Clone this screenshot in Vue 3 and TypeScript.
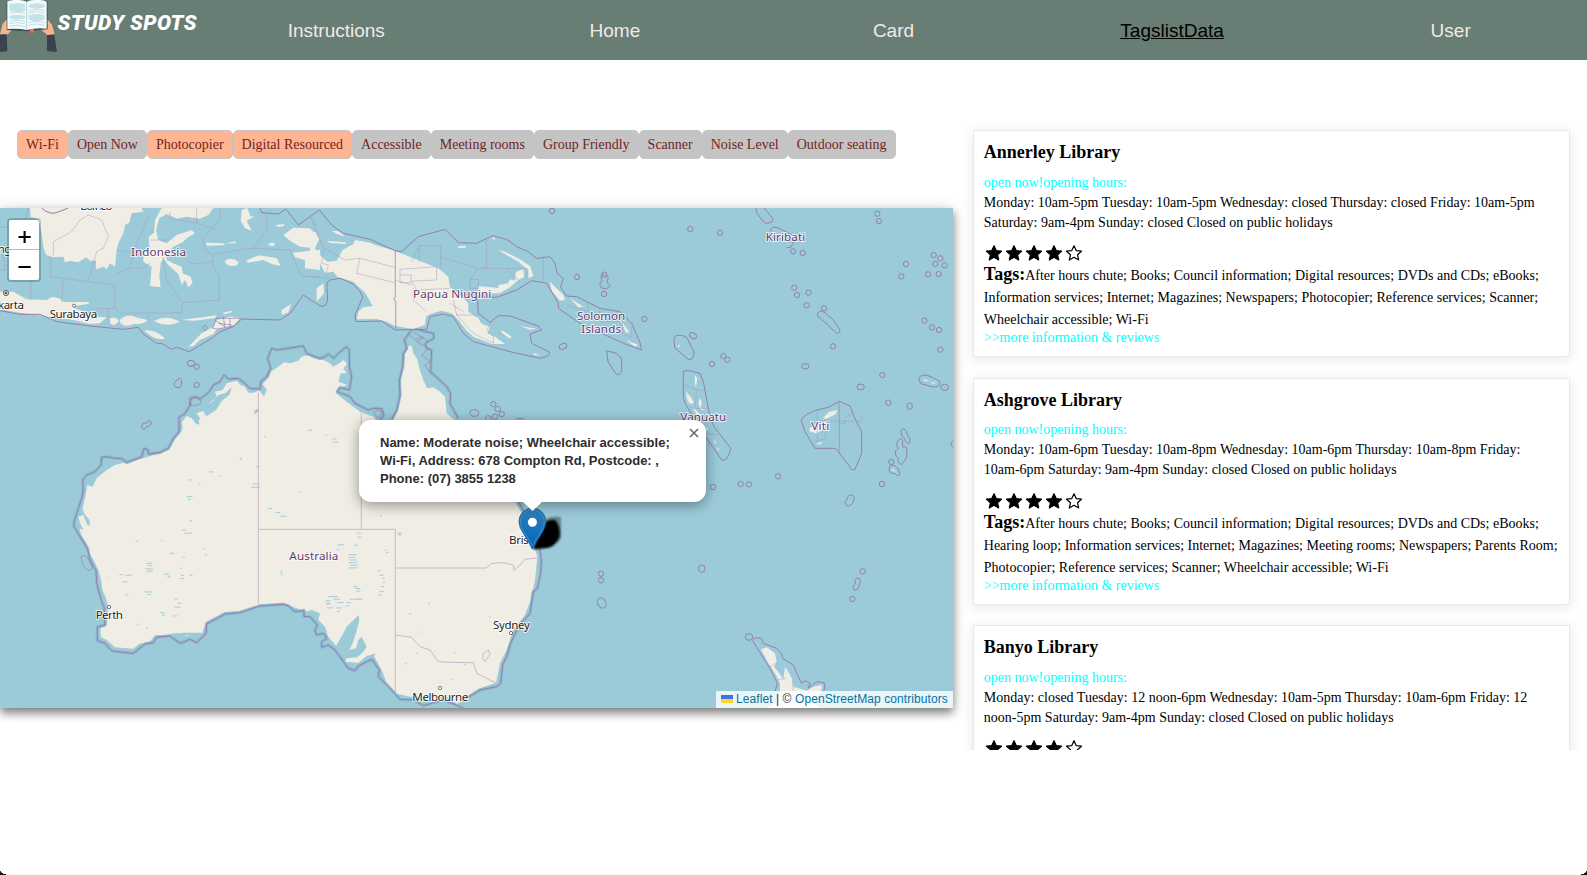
<script setup lang="ts">
interface NavItem { label: string; active?: boolean }
interface Tag { label: string; on?: boolean }
interface Library { name: string; hours: string; tags: string }
interface MapLabel { text: string; x: number; y: number; w: number; kind: 'country' | 'city' }

const nav: NavItem[] = [
  { label: 'Instructions' },
  { label: 'Home' },
  { label: 'Card' },
  { label: 'TagslistData', active: true },
  { label: 'User' },
]

const tags: Tag[] = [
  { label: 'Wi-Fi', on: true },
  { label: 'Open Now' },
  { label: 'Photocopier', on: true },
  { label: 'Digital Resourced', on: true },
  { label: 'Accessible' },
  { label: 'Meeting rooms' },
  { label: 'Group Friendly' },
  { label: 'Scanner' },
  { label: 'Noise Level' },
  { label: 'Outdoor seating' },
]

const libraries: Library[] = [
  {
    name: 'Annerley Library',
    hours: 'Monday: 10am-5pm Tuesday: 10am-5pm Wednesday: closed Thursday: closed Friday: 10am-5pm Saturday: 9am-4pm Sunday: closed Closed on public holidays',
    tags: 'After hours chute; Books; Council information; Digital resources; DVDs and CDs; eBooks; Information services; Internet; Magazines; Newspapers; Photocopier; Reference services; Scanner; Wheelchair accessible; Wi-Fi',
  },
  {
    name: 'Ashgrove Library',
    hours: 'Monday: 10am-6pm Tuesday: 10am-8pm Wednesday: 10am-6pm Thursday: 10am-8pm Friday: 10am-6pm Saturday: 9am-4pm Sunday: closed Closed on public holidays',
    tags: 'After hours chute; Books; Council information; Digital resources; DVDs and CDs; eBooks; Hearing loop; Information services; Internet; Magazines; Meeting rooms; Newspapers; Parents Room; Photocopier; Reference services; Scanner; Wheelchair accessible; Wi-Fi',
  },
  {
    name: 'Banyo Library',
    hours: 'Monday: closed Tuesday: 12 noon-6pm Wednesday: 10am-5pm Thursday: 10am-6pm Friday: 12 noon-5pm Saturday: 9am-4pm Sunday: closed Closed on public holidays',
    tags: '',
  },
]

// Map geometry uses three units per screen pixel.
const labels: MapLabel[] = [
  { text: 'Borneo', x: 241, y: 30, w: 96, kind: 'city' },
  { text: 'Indonesia', x: 393, y: 168, w: 165, kind: 'country' },
  { text: 'Papua Niugini', x: 1239, y: 295, w: 235, kind: 'country' },
  { text: 'Solomon', x: 1731, y: 360, w: 145, kind: 'country' },
  { text: 'Islands', x: 1744, y: 400, w: 119, kind: 'country' },
  { text: 'Kiribati', x: 2297, y: 124, w: 119, kind: 'country' },
  { text: 'Vanuatu', x: 2041, y: 663, w: 138, kind: 'country' },
  { text: 'Viti', x: 2434, y: 690, w: 54, kind: 'country' },
  { text: 'Australia', x: 868, y: 1081, w: 147, kind: 'country' },
  { text: 'karta', x: -6, y: 328, w: 78, kind: 'city' },
  { text: 'ng', x: -7, y: 160, w: 41, kind: 'city' },
  { text: 'Surabaya', x: 149, y: 355, w: 143, kind: 'city' },
  { text: 'Perth', x: 287, y: 1257, w: 82, kind: 'city' },
  { text: 'Brisbane', x: 1527, y: 1033, w: 138, kind: 'city' },
  { text: 'Sydney', x: 1479, y: 1288, w: 111, kind: 'city' },
  { text: 'Melbourne', x: 1237, y: 1503, w: 168, kind: 'city' },
]

// Maritime boundary around Australia, drawn twice: a soft shallow band and the boundary line.
const australiaBoundary =
  'M350 1355 335 1352 315 1330 292 1322 292 1280 315 1275 312 1220 305 1205 290 1150 288 1112 270 1080 262 1045 240 1010 222 980 222 965 235 925 245 895 250 870 248 840 260 825 285 815 303 795 305 772 320 770 345 775 365 775 380 787 425 770 432 745 445 750 445 762 480 757 505 745 520 715 537 695 537 652 555 640 572 612 570 595 590 590 600 598 628 575 640 555 660 545 672 525 685 537 715 535 735 550 750 565 780 567 782 545 800 530 812 505 803 475 815 445 830 450 910 438 920 460 960 475 975 470 985 462 1002 475 1015 460 1040 440 1048 450 1048 500 1055 530 1048 570 1020 563 1012 575 1050 590 1065 610 1105 630 1120 625 1145 625 1152 645 1140 660' +
  'M1175 658 1190 630 1200 585 1198 540 1208 500 1210 460 1220 445 1213 420 1230 395 1240 385 1300 400 1302 415 1275 430 1280 445 1295 450 1292 515 1340 560 1352 580 1350 610 1375 655' +
  'M1555 905 1580 950 1620 1050 1624 1080 1622 1120 1612 1165 1600 1175 1590 1240 1555 1280 1532 1330 1520 1370 1508 1395 1502 1450 1490 1460 1440 1470 1400 1495' +
  'M1390 1524 1360 1512 1330 1500 1270 1517 1240 1500 1200 1498 1165 1460 1135 1430 1138 1410 1115 1378 1075 1398 1065 1412 1045 1405 1005 1350 985 1335 965 1342 965 1325 980 1315 970 1300 950 1305 945 1290 952 1275 930 1250 912 1250 912 1232 885 1235 865 1218 850 1213 780 1218 720 1238 675 1242 620 1272 618 1300 590 1328 570 1318 540 1330 510 1308 470 1312 460 1328 435 1332 400 1360 350 1355'

const atolls: [number, number][] = [
  [1656, 33], [2071, 87], [2160, 98], [2632, 41], [2637, 63], [2379, 154], [2408, 159],
  [2801, 165], [2821, 175], [2806, 192], [2834, 196], [2784, 223], [2816, 222], [2718, 192],
  [2704, 229], [2383, 263], [2391, 285], [2426, 278], [2420, 316], [2472, 325], [1933, 357],
  [2773, 362], [2796, 382], [2817, 390], [2821, 449], [2499, 439], [2170, 468], [2182, 479],
  [2136, 492], [2647, 525], [2665, 608], [1731, 231], [1813, 224],
  [1812, 282], [1480, 612], [1493, 627], [1505, 642], [1485, 650], [1465, 655], [2334, 829], [2139, 861],
  [2222, 852], [2247, 853], [2646, 852], [2588, 1114], [2557, 1197], [1803, 1121],
  [1803, 1141], [590, 555], [590, 500], [2674, 786],
]

const lakes: [number, number, number][] = [
  [718, 775, 8], [768, 798, 10], [626, 814, 14], [658, 826, 6], [565, 838, 9], [596, 850, 5],
  [560, 888, 18], [563, 896, 10], [757, 850, 22], [753, 860, 26], [895, 874, 6], [805, 924, 10],
  [826, 936, 14], [840, 947, 20], [568, 961, 8], [545, 988, 12], [552, 998, 24], [406, 1022, 8],
  [484, 1021, 4], [508, 1058, 14], [610, 1045, 6], [548, 1070, 7], [614, 1063, 8], [438, 1088, 20],
  [443, 1095, 12], [436, 1105, 22], [440, 1112, 18], [540, 1103, 6], [358, 1122, 12], [376, 1124, 20],
  [490, 1121, 18], [502, 1129, 10], [542, 1124, 10], [568, 1124, 10], [366, 1144, 16], [538, 1134, 14],
  [325, 1132, 4], [434, 1174, 22], [442, 1182, 10], [376, 1183, 10], [524, 1196, 8], [532, 1208, 12],
  [524, 1220, 16], [480, 1236, 14], [485, 1243, 10], [520, 1246, 12], [412, 1271, 5], [438, 1283, 5],
  [840, 1115, 8], [842, 1122, 7], [976, 1200, 14], [980, 1208, 10], [930, 688, 6], [923, 690, 10],
  [976, 704, 6], [996, 715, 14], [998, 725, 18], [720, 775, 5], [792, 709, 4], [1140, 946, 5],
  [1070, 998, 12], [1072, 1010, 12], [1192, 998, 14], [1194, 1003, 9], [1012, 1033, 20], [1064, 1034, 10],
  [1010, 1048, 8], [1046, 1062, 24], [1045, 1070, 20], [1048, 1078, 22], [1046, 1086, 26], [1050, 1094, 24],
  [1046, 1102, 26], [1154, 1049, 6], [1158, 1056, 8], [1132, 1111, 10], [1138, 1124, 14], [1148, 1134, 6],
  [1148, 1146, 8], [1142, 1158, 10], [1138, 1173, 14], [1136, 1183, 10], [1060, 1158, 12], [1066, 1164, 14],
  [1070, 1172, 12], [984, 1188, 30], [1000, 1196, 20], [1050, 1196, 30], [978, 1210, 14], [1010, 1206, 22],
  [1040, 1206, 14], [1074, 1196, 14], [980, 1222, 20], [1008, 1222, 18], [1036, 1216, 12], [1010, 1232, 10],
  [1284, 1208, 6], [1226, 1239, 8], [1254, 1295, 4], [1215, 1389, 4], [1248, 1358, 5], [1362, 1357, 4],
  [1392, 1392, 4], [1352, 1436, 6], [1468, 1249, 4],
]
</script>

<template>
  <div class="page">
    <header class="topbar">
      <div class="brand">
        <svg class="logo" viewBox="0 0 171 156">
          <path d="M0 104 20 98 22 154 0 156z M141 104 162 98 171 156 141 153z" fill="#3a4250" />
          <path d="M0 103 8 72 20 58 22 72 40 68 38 76 28 82 40 84 24 103z M164 103 156 74 142 58 140 72 122 70 126 78 136 83 120 86 142 105z" fill="#f5b48c" />
          <path d="M20 4 78 2 142 3 143 88 82 94 20 90z" fill="#35505c" />
          <path d="M22 4Q52-5 80 5 112-6 140 5V86Q110 82 81 90 52 84 22 87z" fill="#f4fbfb" />
          <path d="M28 13q23-7 47 0v20q-24 7-47 0z M86 14q24-8 48 0v8q-24 8-48 0z M28 48q24-7 47 0v7q-24 7-47 0z M86 46q24-8 48 0v14q-24 7-48 0z" fill="#c3e3e9" />
          <path d="M28 40q23-7 47 0M28 64q23-7 47 0M28 71q23-7 47 0M28 79q23-7 47 0M86 32q24-8 48 0M86 39q24-8 48 0M86 68q24-8 48 0M86 76q24-8 48 0" fill="none" stroke="#a5cfd8" stroke-width="2" />
          <path d="M80 5V89" stroke="#abcfd5" stroke-width="3" />
          <path d="M90 87h12v13l-6-4-7 4z" fill="#ef6a42" />
        </svg>
        <span class="brand-name">STUDY SPOTS</span>
      </div>
      <nav class="nav">
        <a v-for="n in nav" :key="n.label" class="nav-link" :class="{ active: n.active }">{{ n.label }}</a>
      </nav>
    </header>

    <main class="content">
      <section class="left">
        <div class="tags">
          <button v-for="t in tags" :key="t.label" class="tag" :class="{ on: t.on }">{{ t.label }}</button>
        </div>
        <div class="map">
          <svg class="map-canvas" viewBox="0 24 2859 1500" preserveAspectRatio="none">
            <rect y="24" width="2859" height="1500" fill="#9bcbd9" />

            <!-- Australia -->
            <path class="land" d="M345 1342 320 1320 302 1310 302 1285 320 1275 324 1220 318 1195 308 1172 303 1140 295 1110 278 1075 268 1062 264 1038 244 1005 238 985 250 990 240 968 235 950 250 945 262 975 270 978 268 960 252 940 248 925 256 890 262 855 278 860 290 835 320 810 345 795 380 786 430 775 470 762 510 742 530 712 547 690 546 665 560 648 575 655 590 674 600 655 590 640 610 632 615 645 624 628 628 610 650 590 645 575 668 570 680 550 710 542 722 555 735 560 745 578 762 578 778 570 792 590 800 570 788 552 808 530 812 515 835 500 852 487 872 490 895 482 905 470 925 465 940 475 970 480 990 490 1000 500 1018 490 1030 480 1042 492 1030 505 1040 520 1022 520 1015 545 1042 555 1015 565 1008 580 1040 605 1080 635 1120 650 1160 700 1180 655 1196 600 1205 500 1218 440 1235 437 1240 460 1252 478 1258 505 1270 540 1282 565 1300 562 1320 575 1335 590 1340 640 1365 662 1400 750 1545 905 1560 930 1600 1030 1612 1070 1605 1140 1592 1200 1575 1245 1540 1290 1520 1350 1500 1390 1488 1448 1440 1465 1400 1490 1372 1512 1355 1500 1330 1485 1310 1505 1270 1490 1230 1490 1185 1480 1160 1450 1145 1410 1122 1368 1128 1360 1100 1368 1075 1388 1035 1385 1040 1375 1072 1372 1090 1355 1100 1340 1085 1310 1075 1320 1068 1345 1048 1350 1058 1330 1068 1300 1078 1260 1076 1245 1040 1280 1030 1300 1008 1338 985 1310 975 1280 955 1260 960 1240 935 1230 915 1235 890 1225 850 1210 780 1214 720 1234 675 1236 618 1265 610 1290 605 1302 585 1300 560 1308 540 1300 520 1300 500 1305 465 1306 445 1330 420 1330 400 1346z" />
            <path class="shallow" :d="australiaBoundary" />
            <path class="bound" :d="australiaBoundary" />
            <path class="bound thin" d="M243 1070q12-10 26 14t-2 28q-20-5-24-42M600 598q-20-12-30 6t20 12q20-6 10-18M1240 395l30 20-20 10 35 20-20 20 25 20-15 10 20 30M1225 400l20 20 20-10 20 15M1120 635l20-5 5 12-12 12z" />
            <path d="M545 1298 605 1298 605 1306 540 1306z" fill="#9bcbd9" />
            <g class="state">
              <path d="M775 578V1212M775 988H1186V1480M1084 640V988M1186 1104H1458L1475 1090 1510 1088 1540 1095 1542 1112 1560 1095 1575 1078 1615 1073M1186 1305 1235 1312 1260 1340 1290 1350 1315 1385 1350 1387 1420 1388 1430 1420 1490 1450" />
              <path d="M1450 1360l15-10 5 12-15 22-6-8z" />
            </g>
            <g fill="#9bcbd9">
              <rect v-for="(l, i) in lakes" :key="'k' + i" :x="l[0]" :y="l[1]" :width="l[2]" height="3.4" opacity=".8" />
              <path d="M762 632l12-6 2 8-12 8zM585 620l14 55-12-8-12-15zM605 622l30-15 20-22 20-5 20-18-6 22-25 20-15 25-30 20z" />
            </g>

            <!-- Indonesia and New Guinea -->
            <g class="land">
              <path d="M90 24 92 50 115 58 125 100 130 140 138 165 158 172 190 170 195 187 210 183 235 187 258 172 270 182 288 182 288 208 310 200 320 208 330 190 345 200 350 150 355 130 370 100 375 75 388 68 395 40 430 35 425 24z" />
              <path d="M485 24H640L625 45 600 56 560 50 530 56 500 42 478 55 468 90 475 120 500 130 530 105 575 90 585 100 560 115 550 125 520 140 500 165 500 180 520 190 545 200 548 220 572 230 578 250 565 262 555 240 545 255 535 222 505 195 490 175 482 190 478 230 482 262 450 258 455 200 430 185 430 165 448 140 446 110 462 98 465 60z" />
              <path d="M725 30 742 24 752 50 765 48 740 62 755 92 735 85 722 62zM618 128 670 130 675 136 620 137zM675 130 710 124 705 130zM675 182q20-14 40 4 0 14-22 12-18-4-18-16M738 182 775 166 830 174 842 198 815 192 790 180 745 188zM805 130 825 128 822 137 808 137zM825 75l30-3-5 7-15 2zM850 105 880 83 930 85 958 115 945 145 900 140 870 122zM878 158 930 152 960 150 960 210 915 205 915 180 885 172zM845 330l28-18-8 25-20 8z" />
              <path d="M930 96 948 96 953 120 940 140 960 165 982 185 1010 182 1028 150 1060 132 1065 120 1110 128 1135 138 1185 152 1260 183 1315 205 1345 230 1350 262 1375 280 1405 310 1405 335 1435 355 1445 372 1470 380 1462 400 1485 410 1515 432 1475 432 1420 410 1398 390 1375 360 1355 340 1325 332 1290 342 1278 350 1275 375 1240 387 1185 378 1160 365 1130 357 1070 358 1075 335 1088 322 1118 318 1105 295 1095 278 1060 245 1012 230 1000 215 975 218 960 190 935 185 930 160z" />
              <path d="M1435 258 1495 264 1495 255 1525 250 1530 238 1545 242 1548 215 1570 208 1572 232 1555 240 1530 262 1500 280 1435 282zM1495 150 1515 155 1560 178 1590 198 1600 228 1585 235 1585 210 1555 185 1520 165zM1375 138l22 0 0 5-22 1zM1475 115l8-4 2 10zM1650 245 1690 285 1695 300 1680 302 1655 272zM1710 295 1750 320 1735 322zM1860 358l28 38-10 2zM1878 420 1915 435 1905 440zM1785 340l35 18-20-5zM950 265 970 250 972 280 950 305zM995 92l20 2 20 14-25-6zM980 122l55 5 5 5-50-3zM1505 390l30 20-5 6-25-18zM1560 378l50 8-20 3zM1600 458l20 8-18 0z" />
              <path d="M0 275 40 275 80 298 140 300 158 290 180 296 190 305 215 306 225 325 290 350 320 352 300 370 270 372 220 360 150 350 60 338 0 328zM215 306l50 0 2 5-45 8zM330 355q20-8 25 8-8 18-24 8zM358 362q15-18 40-14 20 8 45 12-10 14-40 12-35 14-45-10M463 363q35-20 76 2-35 20-76-2M545 360l45-6 60-8-5 8-60 8zM432 392q30-6 64 24-30 4-45-10zM565 440 605 400 640 380 650 360 690 350 722 355 700 378 650 388 640 402 600 420 580 438zM668 338l28-6 2 4-25 7z" />
            </g>
            <path class="bound" d="M0 332 60 343 120 343 170 365 270 378 370 388 415 382 430 402 470 430 485 430 515 448 530 442 568 455 640 412 660 395 700 380 725 357 840 360 870 340 910 285 960 318Q985 325 983 285 975 245 990 240L1020 235 1060 252 1080 275 1088 292 1065 345 1068 365 1145 363 1185 390 1280 388 1290 350 1330 342 1360 350 1390 400 1420 425 1530 455 1620 475Q1655 468 1648 456L1595 430 1590 402 1625 390 1615 378 1530 348 1495 347 1470 367 1435 340 1432 290 1490 292 1550 270 1595 242 1640 250 1675 310 1675 325 1740 370 1870 430 1925 450 1920 428 1895 370 1860 335 1800 325 1730 290 1700 288 1682 262 1690 235 1672 220 1665 190 1650 170 1610 175 1585 155 1550 140 1520 118 1478 107 1430 130 1375 128 1335 88 1255 110 1205 155 1185 152 1110 118 1030 100 995 75 958 30 930 50 895 75 858 27 835 42 785 38 780 24M125 24q25 25 55 10l25-10" />
            <path class="bound thin" d="M638 385l10-30 75 0-20 22-50 10zM645 360l30 20M670 350l5 35M690 355v30M655 370l40 5M608 385q0-10 10-8 8 6 0 14-10 2-10-6" />
            <path class="admin" d="M160 165V125L215 95 240 60 265 45 305 60 325 110 310 145 290 155 265 243M85 24 72 80 0 82M152 170V230L265 245 345 255V325L360 340 545 338 548 308 658 300V230L638 195V165L615 150 607 118 660 60V24M190 236 185 305M92 240V300M350 150 390 158M450 40 410 130 388 205 348 222M388 205 430 203 450 190M490 170 500 240 545 305M560 180 580 192 638 185M638 163 750 145 870 150 905 228 960 232M760 145 800 90V40M930 50 972 145 1035 180 1080 175 1185 202M972 145 965 190 985 195 975 235M0 210H15L8 150M510 36V55L590 70 650 88M590 24V70M445 345V365M950 80 935 55M930 230 990 235M325 325V355M290 340V325H345M450 120H500M1235 185 1258 137H1322V205M1258 137V185M1322 172 1435 205H1580V235M1459 115V205M1435 205 1410 240V265H1435V238H1410M1515 205 1560 245M1630 170V245M1080 175 1070 220 1185 248M1200 225H1235L1232 248H1200V208L1310 200V240L1235 243 1250 270 1350 265M1185 240 1235 255M1240 265V300L1280 335M1360 300 1370 345H1435M1370 345 1420 400 1480 430V410L1460 390 1485 350M1350 310 1390 335M1700 315 1765 335 1762 310M1800 325V365H1860M1867 340V400L1895 412V380" />
            <path class="admin heavy" d="M1186 152V290L1182 297 1187 304V388" />

            <!-- Pacific islands -->
            <g class="bound">
              <circle v-for="(a, i) in atolls" :key="'a' + i" :cx="a[0]" :cy="a[1]" r="8" />
              <path d="M2268 24 2270 38 2290 65Q2300 75 2318 64V55L2292 24M2312 95Q2312 75 2335 84L2378 106Q2388 118 2372 142L2360 143M2452 342Q2458 328 2475 338L2500 360 2520 390Q2518 404 2508 398L2465 358Q2450 352 2452 342M2022 415Q2026 402 2048 407L2060 412 2082 455Q2082 482 2065 478L2024 444zM2050 516Q2052 508 2080 515L2100 520 2110 545 2130 650 2142 680 2192 745Q2185 785 2165 780L2110 700 2055 610 2050 590zM2403 660Q2410 645 2450 630L2485 622 2518 604 2550 618 2562 650 2585 695V760L2565 808Q2552 815 2548 798L2507 745H2445L2415 695zM1820 452 1850 460 1865 475V515Q1855 530 1845 518L1824 485zM1808 245q-12-20 5-22l12 10-4 15q20 12-4 18-24 0-15-22M2756 535q10-16 34-6l28 14q8 18-18 18l-38-10zM525 560q-8-10 6-20 12-12 14 4 0 28-20 16M425 682q0-16 14-12 6-16 15-4-2 14-14 14-8 14-15 2" />
              <ellipse cx="573" cy="490" rx="11" ry="9" />
              <ellipse cx="1689" cy="439" rx="12" ry="8" transform="rotate(-25 1689 439)" />
              <ellipse cx="2079" cy="407" rx="11" ry="8" transform="rotate(35 2079 407)" />
              <ellipse cx="2416" cy="499" rx="11" ry="8" />
              <ellipse cx="2582" cy="561" rx="11" ry="9" transform="translate(-260 0)" visibility="hidden" />
              <ellipse cx="2582" cy="561" rx="11" ry="9" />
              <ellipse cx="2729" cy="618" rx="8" ry="10" />
              <ellipse cx="1423" cy="639" rx="13" ry="10" />
              <ellipse cx="1560" cy="662" rx="13" ry="7" />
              <ellipse cx="2834" cy="562" rx="12" ry="9" />
              <ellipse cx="2075" cy="1109" rx="10" ry="11" transform="translate(30 -3)" />
              <ellipse cx="1805" cy="1209" rx="12" ry="16" transform="rotate(-30 1805 1209)" />
              <path d="M2540 917q-10-8 0-18 4-16 16-14 12 6 4 18-6 18-20 14M2562 1170q-8-10 4-18-4-16 8-18 12 4 4 20-2 18-16 16M2704 690q8-8 15 4l4 14q12 10 4 22-12 0-14-16-12-8-9-24M2692 725q10-16 16-4v20q12-4 12 8 4 12-2 26l-12 18q-14 0-12-20-10-6-8-20l10-8q-10-8-4-20M2668 800q14-10 26 6l6 16q-8 10-16-2-20 4-16-20M2859 722q-12 8 0 20" />
            </g>
            <g class="land">
              <path d="M2058 575 2072 590 2082 608 2070 612 2062 600zM2085 525 2092 535 2088 565 2084 545zM2098 595l8 10-4 18 14 8-14-2-6-18zM2078 620 2108 650 2090 645zM2118 680l8 8-6 2zM2140 715l10 16-6-2zM2152 740l7 12-7-3zM2428 685 2450 675 2480 662 2475 685 2450 700 2430 695zM2468 655 2488 635 2512 630 2508 642 2480 656zM2450 730l18-5-5 6-14 4zM2032 437l12-3-8 8zM2066 468l5 2-4 2zM2770 537l18 6-15 0zM2793 547l20 2-16 2zM2674 805l14 10-10-2z" />
            </g>
            <path class="admin" d="M2050 555 2090 568 2118 575M2090 568 2085 625 2130 625M2085 625 2065 620M2117 700 2150 705M2452 630V740M2452 663H2585V640M2517 665V670H2535L2538 650 2560 640M2440 725 2475 718 2478 695" />
            <path class="admin heavy" d="M2518 604V755" />
            <g class="bound">
              <ellipse cx="2247" cy="1311" rx="11" ry="10" />
              <path d="M2258 1322 2265 1313 2285 1315 2290 1330 2330 1345 2345 1362 2348 1375 2380 1395 2395 1430 2405 1450Q2412 1436 2430 1450L2425 1465 2450 1445 2472 1448 2475 1465 2455 1500 2450 1524M2258 1322 2275 1350 2310 1405 2320 1425 2332 1450 2325 1475" />
            </g>
            <path class="land" d="M2264 1322 2283 1342 2278 1338zM2283 1348 2300 1342 2325 1360 2330 1385 2322 1400 2342 1425 2350 1440 2355 1400 2365 1415 2378 1440 2380 1460 2420 1472 2440 1460 2466 1455 2462 1480 2440 1500 2460 1524H2300L2320 1510 2340 1485V1450L2325 1420 2305 1390z" />
            <path class="admin" d="M2300 1405 2335 1385M2330 1440 2358 1435M2377 1440 2380 1475" />

            <g fill="#fff" stroke="#555" stroke-width="2.4">
              <circle cx="222" cy="317" r="4.5" /><circle cx="327" cy="1221" r="5" />
              <circle cx="1533" cy="1299" r="5" /><circle cx="1320" cy="1464" r="5" />
              <circle cx="18" cy="279" r="8" fill="#e8e4d8" /><circle cx="18" cy="279" r="3" fill="#333" />
            </g>
            <text v-for="l in labels" :key="l.text" :x="l.x" :y="l.y" :textLength="l.w" :class="l.kind">{{ l.text }}</text>
          </svg>

          <svg class="marker" viewBox="0 0 50 50">
            <defs>
              <linearGradient id="pin" x1="0" y1="0" x2="0" y2="1">
                <stop offset="0" stop-color="#2f7fba" /><stop offset="1" stop-color="#0068bd" />
              </linearGradient>
              <filter id="soft" x="-30%" y="-30%" width="160%" height="160%"><feGaussianBlur stdDeviation="1.1" /></filter>
            </defs>
            <path d="M15 45 23 18Q31 10 43 12V33Q37 43 26 43z" fill="#000" opacity=".35" filter="url(#soft)" />
            <path d="M15 44 23 22Q30 13 37 15 43 21 41.500 32 37 42 28 43 15 44" fill="#000" filter="url(#soft)" />
            <path d="M14.300 44Q11 37 5.500 28.500Q1 22 1 16.500A13.400 13.400 0 0 1 27.800 16.500Q27.800 22 23.500 28.500 18 37 14.300 44z" fill="url(#pin)" stroke="#246a9e" stroke-width="1" />
            <path d="M14.300 41Q11 34 6.500 27.600 2.400 21 2.400 16.500A12 12 0 0 1 26.400 16.500Q26.400 21 22.400 27.600 18 34 14.300 41z" fill="none" stroke="#5b9fd0" stroke-width="1" opacity=".55" />
            <circle cx="14.400" cy="17.300" r="4.500" fill="#fff" />
          </svg>

          <div class="popup">
            <svg class="popup-close" viewBox="0 0 10 10"><path d="M1 1 9 9M9 1 1 9" stroke="#666" stroke-width="1.500" /></svg>
            <b>Name: Moderate noise; Wheelchair accessible;<br>Wi-Fi, Address: 678 Compton Rd, Postcode: ,<br>Phone: (07) 3855 1238</b>
          </div>
          <div class="popup-tip"></div>

          <div class="zoom">
            <svg viewBox="0 0 30 60">
              <path d="M0 29.500H30" stroke="#bbb" />
              <path d="M9.500 17H21.700M15.600 10.900V23.100M9.500 47H21.700" stroke="#000" stroke-width="2.100" />
            </svg>
          </div>

          <div class="attribution">
            <svg class="flag" viewBox="0 0 12 8"><path fill="#4072dc" d="M0 0h12v4H0z" /><path fill="#ffd430" d="M0 4h12v4H0z" /></svg>
            <a>Leaflet</a> | © <a>OpenStreetMap contributors</a>
          </div>
        </div>
      </section>

      <aside class="cards">
        <article v-for="lib in libraries" :key="lib.name" class="card">
          <h3>{{ lib.name }}</h3>
          <p class="open">open now!opening hours:</p>
          <p class="hours">{{ lib.hours }}</p>
          <div class="stars">
            <svg v-for="s in 5" :key="s" viewBox="0 0 20 20">
              <path
                d="M10 2.700 12.200 7.600 17.500 8.200 13.500 11.700 14.700 17 10 14.300 5.300 17 6.500 11.700 2.500 8.200 7.800 7.600z"
                :fill="s < 5 ? '#000' : '#fff'" stroke="#000" stroke-width="1.200" stroke-linejoin="round"
              />
            </svg>
          </div>
          <template v-if="lib.tags">
            <p class="taglist"><b>Tags:</b>{{ lib.tags }}</p>
            <a class="more">&gt;&gt;more information &amp; reviews</a>
          </template>
          <div v-else class="pending"></div>
        </article>
      </aside>
    </main>

    <i class="corner corner-left"></i>
    <i class="corner corner-right"></i>
  </div>
</template>

<style>
body { margin: 0; background: #fff; overflow: hidden; }
</style>

<style scoped>
.page { position: relative; width: 100%; height: 875px; overflow: hidden; background: #fff; font-family: "Liberation Serif", "Times New Roman", serif; font-size: 14px; color: #000; }
.topbar { display: flex; height: 60px; background: #687e74; }
.brand { display: flex; flex: none; width: 197px; }
.logo { width: 57px; height: 52px; flex: none; }
.brand-name { margin: 10.500px 0 0 .5px; font: italic 900 21px/24px Roboto, sans-serif; color: #fff; letter-spacing: .45px; white-space: nowrap; }
.nav { display: flex; flex: none; }
.nav-link { width: 278.600px; text-align: center; font: 19px/62px "Liberation Sans", Arial, sans-serif; color: #f1e9e9; }
.nav-link.active { color: #000; text-decoration: underline; }

.content { display: flex; }
.left { flex: 0 0 953px; padding-top: 70px; }
.tags { display: flex; height: 78px; padding-left: 17px; align-items: flex-start; }
.tag { height: 29px; padding: 0 8px; border: 1px solid #c4c4c4; border-radius: 5px; background: #c4c4c4; color: #731f22; font: 14px/27px "Liberation Serif", "Times New Roman", serif; white-space: nowrap; }
.tag.on { background: #ffb591; }

.map { position: relative; width: 953px; height: 500px; box-shadow: 0 0 16px rgba(0, 0, 0, .1), 0 5px 9px rgba(0, 0, 0, .48); }
.map-canvas { display: block; width: 953px; height: 500px; }
.land { fill: #f0ede5; }
.shallow { fill: none; stroke: #8fbbd0; stroke-width: 10; stroke-linejoin: round; }
.bound { fill: none; stroke: #967fa9; stroke-width: 3; stroke-linejoin: round; }
.bound.thin { stroke-width: 2; }
.state { fill: none; stroke: #cdb6c9; stroke-width: 3; stroke-linejoin: round; }
.admin { fill: none; stroke: #ab92b5; stroke-width: 2; opacity: .7; stroke-linejoin: round; }
.admin.heavy { stroke-width: 4; }
.country, .city { font-family: "Noto Sans", sans-serif; paint-order: stroke; stroke: rgba(255, 255, 255, .75); stroke-width: 6; stroke-linejoin: round; }
.country { font-size: 35px; fill: #663a6b; }
.city { font-size: 35px; fill: #252525; }

.marker { position: absolute; left: 518px; top: 297px; width: 50px; height: 50px; }
.popup { position: absolute; left: 359px; top: 212px; width: 347px; height: 82px; box-sizing: border-box; padding: 14px 0 0 21px; border-radius: 12px; background: #fff; box-shadow: 0 3px 14px rgba(0, 0, 0, .4); color: #2d2d2d; font: 13px/18.200px "Liberation Sans", Arial, sans-serif; white-space: nowrap; }
.popup-tip { position: absolute; left: 522px; top: 293px; width: 21px; height: 10px; background: #fff; clip-path: polygon(0 0, 100% 0, 50% 100%); }
.popup-close { position: absolute; top: 8px; right: 7px; width: 10px; height: 10px; }
.zoom { position: absolute; left: 7px; top: 10px; width: 30px; height: 60px; border: 2px solid rgba(0, 0, 0, .2); border-radius: 4px; background: #fff; background-clip: padding-box; }
.zoom svg { display: block; width: 30px; height: 60px; }
.attribution { position: absolute; right: 0; bottom: 0; width: 237px; height: 17px; box-sizing: border-box; padding-left: 5px; background: rgba(255, 255, 255, .8); font: 12px/16px "Liberation Sans", Arial, sans-serif; letter-spacing: .08px; color: #333; white-space: nowrap; }
.attribution a { color: #0074a5; }
.flag { width: 12px; height: 8px; margin-right: 3px; }

.cards { flex: 1; height: 690px; box-sizing: border-box; padding: 70.200px 17.300px 0 20.300px; overflow: hidden; }
.card { margin-bottom: 20.400px; padding: 10px 10px 10px 9.500px; border: 1px solid #e6e6f5; background: #fff; box-shadow: 0 2px 12px rgba(0, 0, 0, .1); }
.card h3 { margin: 0 0 9.500px; font-size: 18px; line-height: 22px; }
.card p { margin: 0; }
.open, .hours { line-height: 20px; }
.open, .more { color: #0ff; }
.hours { height: 40px; }
.stars { display: flex; height: 20.200px; margin-top: 10.300px; }
.stars svg { width: 20px; height: 20px; }
.taglist { line-height: 22px; }
.taglist b { font-size: 18px; }
.more { display: block; margin-top: -.8px; line-height: 16px; }
.pending { height: 80px; }

.corner { position: absolute; bottom: 0; width: 10px; height: 5px; }
.corner-left { left: 0; background: radial-gradient(ellipse 10px 5px at 100% 0, transparent 97%, #241210 100%); }
.corner-right { right: 0; background: radial-gradient(ellipse 10px 5px at 0 0, transparent 97%, #241210 100%); }
</style>
